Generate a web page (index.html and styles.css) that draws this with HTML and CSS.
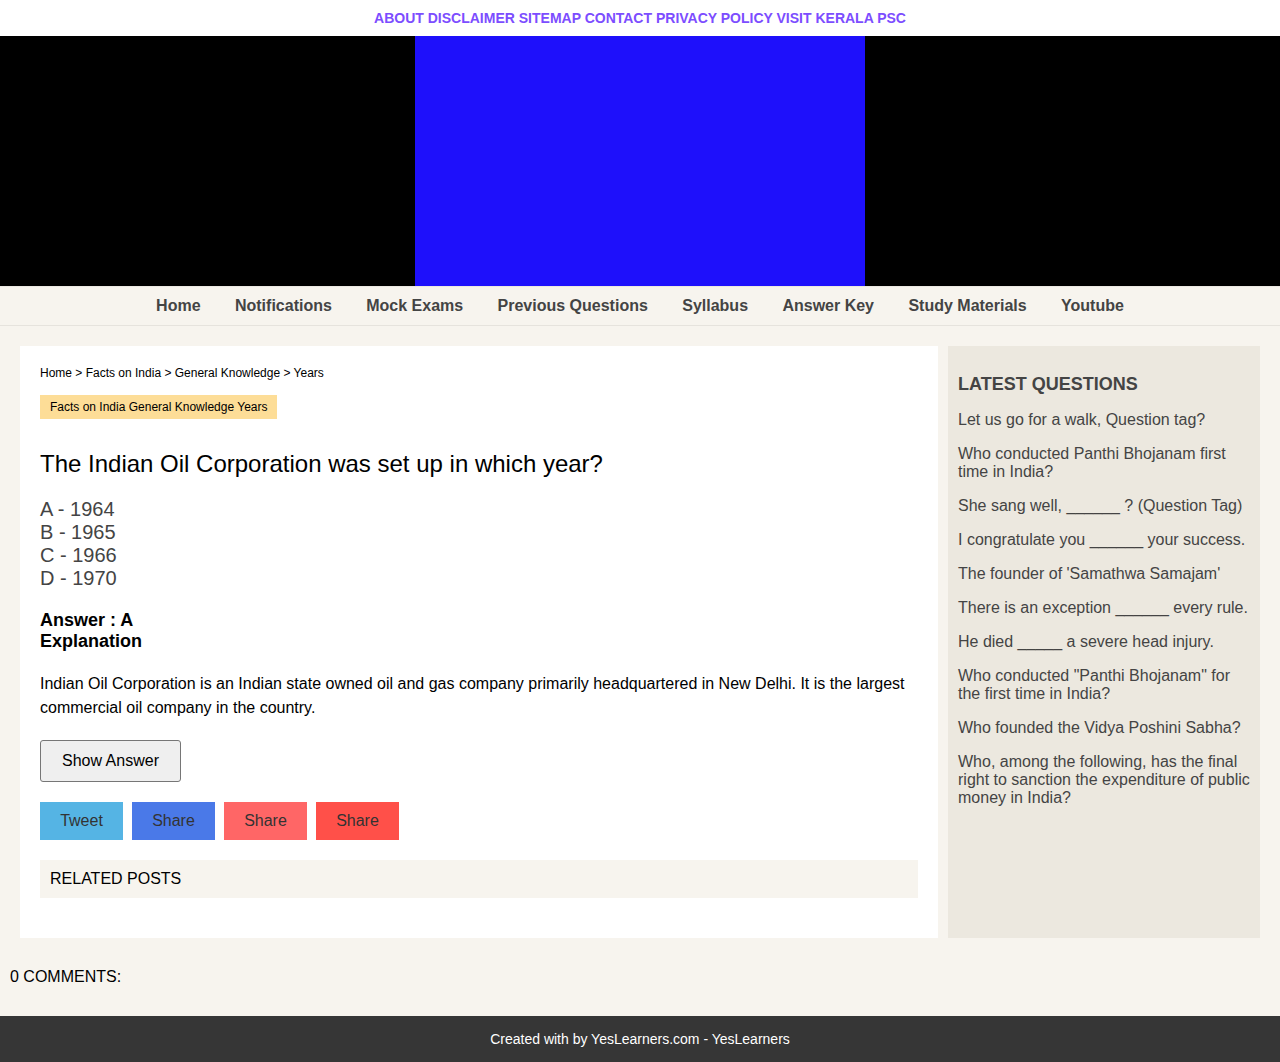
FILE: index.html
```html
<!DOCTYPE html>
<html lang="en">
<head>
<meta charset="utf-8">
<title>The Indian Oil Corporation was set up in which year?</title>
<link rel="stylesheet" href="styles.css">
</head>
<body>
<div class="topbar">
  <a href="#">ABOUT</a> <a href="#">DISCLAIMER</a> <a href="#">SITEMAP</a> <a href="#">CONTACT</a> <a href="#">PRIVACY POLICY</a> <a href="#">VISIT KERALA PSC</a>
</div>
<div class="banner"><div class="ad"></div></div>
<nav class="nav">
  <a href="#">Home</a>
  <a href="#">Notifications</a>
  <a href="#">Mock Exams</a>
  <a href="#">Previous Questions</a>
  <a href="#">Syllabus</a>
  <a href="#">Answer Key</a>
  <a href="#">Study Materials</a>
  <a href="#">Youtube</a>
</nav>
<main class="main">
  <article class="post">
    <div class="crumbs">Home &gt; Facts on India &gt; General Knowledge &gt; Years</div>
    <div class="tags"><span class="tag">Facts on India General Knowledge Years</span></div>
    <h1 class="title">The Indian Oil Corporation was set up in which year?</h1>
    <div class="options">
      <div>A - 1964</div>
      <div>B - 1965</div>
      <div>C - 1966</div>
      <div>D - 1970</div>
    </div>
    <div class="answer">
      <div>Answer : A</div>
      <div>Explanation</div>
    </div>
    <p class="explain">Indian Oil Corporation is an Indian state owned oil and gas company primarily headquartered in New Delhi. It is the largest commercial oil company in the country.</p>
    <button class="show">Show Answer</button>
    <div class="shares">
      <a class="share tw" href="#">Tweet</a>
      <a class="share fb" href="#">Share</a>
      <a class="share s3" href="#">Share</a>
      <a class="share s4" href="#">Share</a>
    </div>
    <div class="related">RELATED POSTS</div>
  </article>
  <aside class="side">
    <h3 class="side-title">LATEST QUESTIONS</h3>
    <p>Let us go for a walk, Question tag?</p>
    <p>Who conducted Panthi Bhojanam first time in India?</p>
    <p>She sang well, ______ ? (Question Tag)</p>
    <p>I congratulate you ______ your success.</p>
    <p>The founder of 'Samathwa Samajam'</p>
    <p>There is an exception ______ every rule.</p>
    <p>He died _____ a severe head injury.</p>
    <p>Who conducted "Panthi Bhojanam" for the first time in India?</p>
    <p>Who founded the Vidya Poshini Sabha?</p>
    <p>Who, among the following, has the final right to sanction the expenditure of public money in India?</p>
  </aside>
</main>
<div class="comments">0 COMMENTS:</div>
<footer class="footer">Created with by YesLearners.com - YesLearners</footer>
</body>
</html>
```
FILE: styles.css
```css
* { box-sizing: border-box; }
body {
  margin: 0;
  background: #f7f4ee;
  font-family: "Liberation Sans", Arial, sans-serif;
  color: #000;
}
a { text-decoration: none; color: inherit; }

.topbar {
  background: #fff;
  height: 36px;
  line-height: 37px;
  text-align: center;
  font-size: 14px;
  font-weight: bold;
  color: #7c4dff;
}
.topbar a { color: #7c4dff; }

.banner {
  background: #000;
  height: 250px;
  display: flex;
  justify-content: center;
}
.ad {
  width: 450px;
  height: 250px;
  background: #1e10fb;
}

.nav {
  height: 40px;
  display: flex;
  justify-content: center;
  align-items: center;
  gap: 34.4px;
  background: #f7f4ee;
  border-top: 1px solid #ebe8e2;
  border-bottom: 1px solid #e6e3dd;
  font-size: 16px;
  font-weight: bold;
}
.nav a { color: #444; }

.main {
  display: flex;
  gap: 10px;
  padding: 20px;
  align-items: stretch;
}
.post {
  flex: 0 0 918px;
  background: #fff;
  padding: 20px 20px 40px;
}
.crumbs {
  font-size: 12px;
  line-height: 14px;
  color: #000;
}
.tags { margin-top: 15px; }
.tag {
  display: inline-block;
  background: #fddd97;
  font-size: 12px;
  line-height: 14px;
  padding: 5px 10px;
}
.title {
  font-size: 24px;
  font-weight: normal;
  line-height: 28px;
  margin: 31px 0 20px;
}
.options {
  font-size: 20px;
  line-height: 23px;
  color: #444;
}
.answer {
  margin-top: 20px;
  font-size: 18px;
  font-weight: bold;
  line-height: 21px;
}
.explain {
  margin: 20px 0 20px;
  font-size: 16px;
  line-height: 24px;
}
.show {
  display: block;
  width: 141px;
  height: 42px;
  background: #efefef;
  border: 1px solid #767676;
  border-radius: 3px;
  font-family: inherit;
  font-size: 16px;
  color: #000;
}
.shares {
  display: flex;
  gap: 9px;
  margin-top: 20px;
}
.share {
  width: 83px;
  height: 38px;
  display: flex;
  align-items: center;
  justify-content: center;
  font-size: 16px;
  color: #333;
}
.tw { background: #55b4e4; }
.fb { background: #4a79e8; }
.s3 { background: #ff6666; }
.s4 { background: #ff5049; }
.related {
  margin-top: 20px;
  background: #f7f4ee;
  height: 38px;
  padding-left: 10px;
  display: flex;
  align-items: center;
  font-size: 16px;
}

.side {
  flex: 1;
  background: #ece8df;
  padding: 10px;
  color: #444;
}
.side-title {
  margin: 18px 0 16px;
  font-size: 18px;
  line-height: 21px;
  color: #444;
}
.side p {
  margin: 0 0 16px;
  font-size: 16px;
  line-height: 18px;
}

.comments {
  padding: 10px;
  margin-bottom: 20px;
  font-size: 16px;
  line-height: 18px;
}
.footer {
  background: #363636;
  color: #fff;
  height: 46px;
  display: flex;
  align-items: center;
  justify-content: center;
  font-size: 14px;
}
```
